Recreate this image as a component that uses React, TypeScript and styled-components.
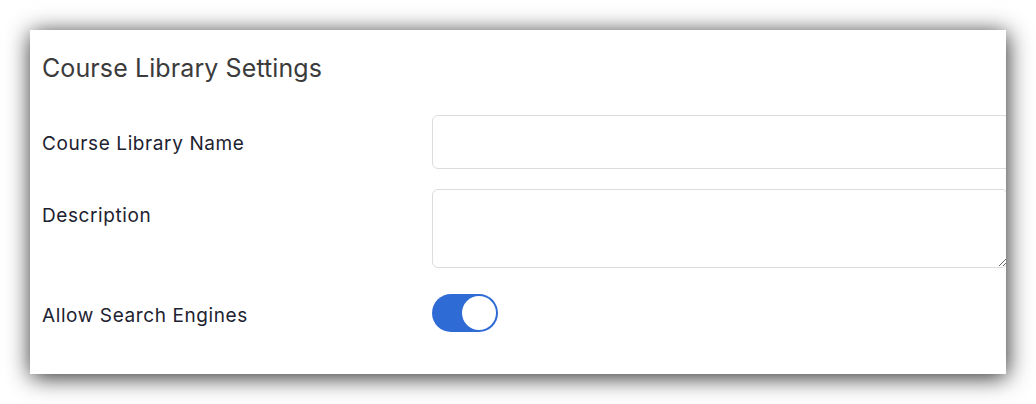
import styled, { createGlobalStyle } from "styled-components";

const GlobalStyle = createGlobalStyle`
	html, body {
		margin: 0;
		padding: 0;
		background: #ffffff;
	}
	body {
		font-family: "Inter", "Liberation Sans", sans-serif;
	}
`;

const Page = styled.div`
	width: 1036px;
	height: 404px;
	padding: 30px;
	box-sizing: border-box;
	background: #ffffff;
`;

const Card = styled.div`
	width: 976px;
	height: 344px;
	background: #ffffff;
	box-shadow: 1px 3px 22px rgba(0, 0, 0, 0.85);
	overflow: hidden;
	padding: 23px 0 0 12px;
	box-sizing: border-box;
`;

const Title = styled.h2`
	margin: 0;
	font-size: 25px;
	line-height: 30px;
	font-weight: 400;
	letter-spacing: 0.1px;
	color: #3b3b3b;
`;

const Form = styled.div`
	margin-top: 32px;
	display: grid;
	grid-template-columns: 390px 590px;
	row-gap: 20px;
`;

const Label = styled.label<{ $top?: boolean; $shift?: number }>`
	font-size: 19px;
	line-height: 24px;
	letter-spacing: 0.6px;
	color: #1d2230;
	align-self: ${(p) => (p.$top ? "start" : "center")};
	padding-top: ${(p) => (p.$top ? "15px" : "0")};
	margin-top: ${(p) => p.$shift ?? 0}px;
`;

const TextInput = styled.input`
	height: 54px;
	width: 100%;
	box-sizing: border-box;
	border: 1px solid #dcdcdc;
	border-radius: 6px;
	padding: 0 14px;
	font: inherit;
	outline: none;
`;

const TextArea = styled.textarea`
	height: 79px;
	width: 576px;
	box-sizing: border-box;
	border: 1px solid #dcdcdc;
	border-radius: 6px;
	padding: 10px 14px;
	font: inherit;
	outline: none;
	display: block;
`;

const ToggleRow = styled.div`
	margin-top: 6px;
	display: flex;
	align-items: center;
`;

const Toggle = styled.button<{ $on: boolean }>`
	position: relative;
	width: 66px;
	height: 38px;
	border-radius: 19px;
	border: none;
	padding: 0;
	background: ${(p) => (p.$on ? "#2f6bd4" : "#cfd4dc")};
	cursor: pointer;
`;

const Knob = styled.span<{ $on: boolean }>`
	position: absolute;
	top: 2px;
	left: ${(p) => (p.$on ? "30px" : "2px")};
	width: 34px;
	height: 34px;
	border-radius: 50%;
	background: #ffffff;
`;

export default function App() {
	return (
		<>
			<GlobalStyle />
			<Page>
				<Card>
					<Title>Course Library Settings</Title>
					<Form>
						<Label htmlFor="lib-name" $shift={4}>
							Course Library Name
						</Label>
						<TextInput id="lib-name" type="text" />
						<Label htmlFor="lib-desc" $top>
							Description
						</Label>
						<TextArea id="lib-desc" />
						<Label $shift={12}>Allow Search Engines</Label>
						<ToggleRow>
							<Toggle $on type="button" aria-pressed="true">
								<Knob $on />
							</Toggle>
						</ToggleRow>
					</Form>
				</Card>
			</Page>
		</>
	);
}
